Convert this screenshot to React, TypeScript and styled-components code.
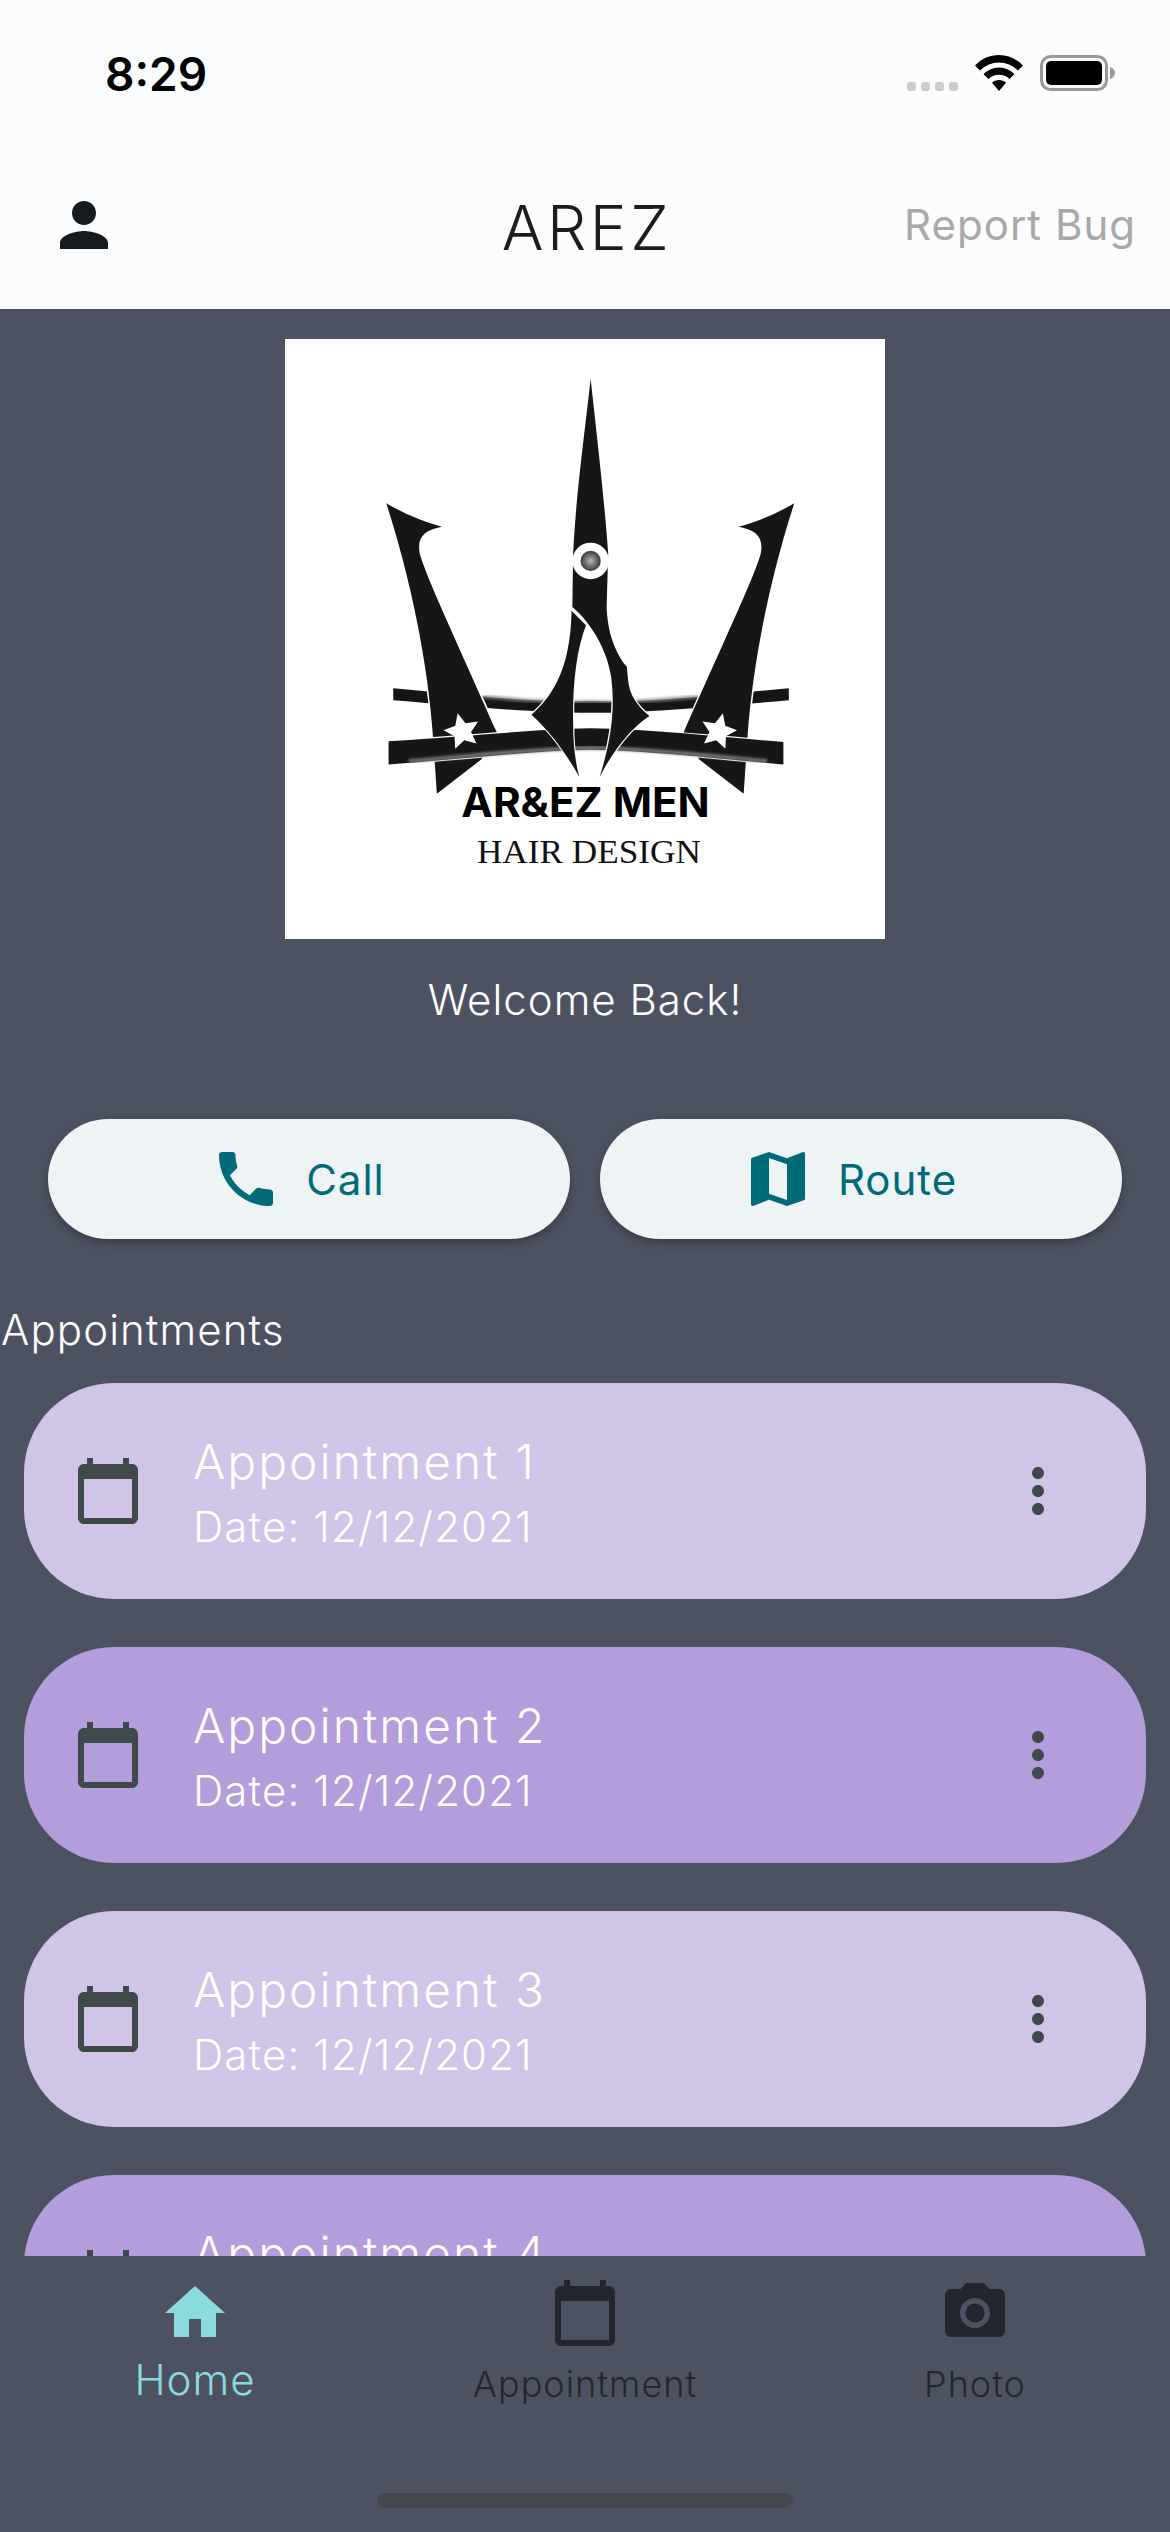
import React from 'react'
import styled, { createGlobalStyle } from 'styled-components'
import {
  MdCalendarToday,
  MdHome,
  MdMap,
  MdMoreVert,
  MdPerson,
  MdPhone,
  MdPhotoCamera,
} from 'react-icons/md'

const GlobalStyle = createGlobalStyle`
  html, body {
    margin: 0;
    padding: 0;
    background: #4d5262;
  }
  * {
    box-sizing: border-box;
  }
`

const Screen = styled.div`
  width: 1170px;
  height: 2532px;
  display: flex;
  flex-direction: column;
  overflow: hidden;
  background: #4d5262;
  font-family: Inter, sans-serif;
`

const Header = styled.header`
  flex: none;
  height: 309px;
  background: #fbfcfe;
`

const StatusBar = styled.div`
  height: 141px;
  display: flex;
  align-items: flex-start;
  justify-content: space-between;
  padding: 46px 55px 0 105px;
`

const Clock = styled.span`
  font-weight: 600;
  font-size: 46px;
  line-height: 56px;
  color: #000;
`

const StatusIcons = styled.div`
  display: flex;
  align-items: flex-start;
  padding-top: 9px;
`

const SignalDots = styled.div`
  display: flex;
  gap: 5px;
  margin-top: 27px;
  margin-right: 17px;
`

const SignalDot = styled.i`
  width: 9px;
  height: 9px;
  border-radius: 3px;
  background: #cccccc;
`

const Toolbar = styled.div`
  height: 168px;
  display: grid;
  grid-template-columns: 1fr auto 1fr;
  align-items: center;
`

const ProfileIcon = styled(MdPerson)`
  display: block;
  width: 72px;
  height: 72px;
  margin-left: 48px;
  color: #171a1c;
`

const Title = styled.h1`
  margin: 6px 0 0 4px;
  font-weight: 300;
  font-size: 62px;
  line-height: 72px;
  letter-spacing: 3.5px;
  color: #1a1c1e;
`

const ReportButton = styled.span`
  justify-self: end;
  margin-right: 34px;
  font-size: 42px;
  line-height: 52px;
  letter-spacing: 1px;
  color: #a8a8a8;
`

const Main = styled.main`
  flex: 1;
  min-height: 0;
  overflow: hidden;
  display: flex;
  flex-direction: column;
  align-items: center;
`

const LogoFrame = styled.div`
  flex: none;
  width: 600px;
  height: 600px;
  margin-top: 30px;
  background: #fff;
`

const Welcome = styled.p`
  margin: 31px 0 0;
  font-weight: 300;
  font-size: 42px;
  line-height: 60px;
  letter-spacing: 1px;
  color: #fff;
`

const ActionRow = styled.div`
  flex: none;
  width: 100%;
  display: grid;
  grid-template-columns: 1fr 1fr;
  gap: 30px;
  padding: 0 48px;
  margin-top: 89px;
`

const ActionButton = styled.button`
  height: 120px;
  display: flex;
  align-items: center;
  justify-content: center;
  gap: 24px;
  padding: 0 23px 0 0;
  border: none;
  border-radius: 60px;
  background: #eef3f6;
  box-shadow: 0 4px 8px rgba(0, 0, 0, 0.28);
  font-family: inherit;
  font-size: 42px;
  letter-spacing: 1px;
  color: #006a78;

  svg {
    width: 72px;
    height: 72px;
  }
`

const SectionTitle = styled.h2`
  align-self: flex-start;
  margin: 64px 0 0 1px;
  font-weight: 300;
  font-size: 42px;
  line-height: 54px;
  letter-spacing: 1.1px;
  color: #fff;
`

const AppointmentList = styled.div`
  flex: none;
  width: 100%;
  display: flex;
  flex-direction: column;
  gap: 48px;
  padding: 0 24px;
  margin-top: 26px;
`

const AppointmentCard = styled.div<{ $tone: string }>`
  flex: none;
  height: 216px;
  display: flex;
  align-items: center;
  padding: 0 72px 0 48px;
  border-radius: 90px;
  background: ${(p) => p.$tone};
  color: #3f484b;

  > svg {
    flex: none;
    width: 72px;
    height: 72px;
  }
`

const CardText = styled.div`
  flex: 1;
  min-width: 0;
  padding: 3px 0 0 49px;
  color: #fff;
`

const CardTitle = styled.div`
  font-weight: 300;
  font-size: 48px;
  line-height: 66px;
  letter-spacing: 2px;
`

const CardDate = styled.div`
  margin-top: 3px;
  font-weight: 300;
  font-size: 42px;
  line-height: 58px;
  letter-spacing: 1.15px;
`

const TabBar = styled.nav`
  flex: none;
  height: 276px;
  position: relative;
  display: grid;
  grid-template-columns: repeat(3, 1fr);
  align-items: start;
  padding-top: 21px;
  background: #4d5262;
`

const Tab = styled.div<{ $active?: boolean }>`
  display: flex;
  flex-direction: column;
  align-items: center;
  color: ${(p) => (p.$active ? '#8bdade' : '#23262e')};

  svg {
    width: 72px;
    height: 72px;
  }
`

const TabLabel = styled.span<{ $active?: boolean }>`
  font-weight: 300;
  font-size: ${(p) => (p.$active ? 42 : 36)}px;
  line-height: 48px;
  letter-spacing: 1px;
  margin-top: ${(p) => (p.$active ? 7 : 11)}px;
`

const HomeIndicator = styled.div`
  position: absolute;
  left: 377px;
  bottom: 24px;
  width: 416px;
  height: 15px;
  border-radius: 8px;
  background: #45474f;
`

const starPoints = (cx: number, cy: number, rot: number) => {
  const pts: string[] = []
  for (let i = 0; i < 10; i++) {
    const r = i % 2 === 0 ? 48 : 23
    const a = ((rot + i * 36 - 90) * Math.PI) / 180
    pts.push(`${cx + r * Math.cos(a)},${cy + r * Math.sin(a)}`)
  }
  return pts.join(' ')
}

const PRONG =
  'M272 432C320 460 370 480 415 492C370 500 350 520 358 560C372 615 450 780 556 1020L516 1090L402 1178L392 1030C378 830 330 610 272 432Z'

const Logo = () => (
  <svg viewBox="12 10 1541 1541" width="600" height="600">
    <defs>
      <radialGradient id="pivot">
        <stop offset="0" stopColor="#b5b5b5" />
        <stop offset="1" stopColor="#3a3a3a" />
      </radialGradient>
      <filter id="soft">
        <feGaussianBlur stdDeviation="4" />
      </filter>
    </defs>
    <path
      d="M290 907C500 925 650 945 797 940C950 945 1100 925 1306 907L1306 938C1100 955 950 970 797 970C650 970 500 955 290 938Z"
      fill="#151716"
    />
    <path
      d="M520 928C640 940 720 944 797 942C880 944 960 940 1075 928"
      fill="none"
      stroke="#8a8a8a"
      strokeWidth="7"
      filter="url(#soft)"
    />
    <path d={PRONG} fill="#151716" stroke="#fff" strokeWidth="8" paintOrder="stroke" />
    <path
      d={PRONG}
      transform="matrix(-1 0 0 1 1592 0)"
      fill="#151716"
      stroke="#fff"
      strokeWidth="8"
      paintOrder="stroke"
    />
    <path
      d="M278 1043C500 1030 650 1012 797 1010C950 1012 1100 1030 1292 1045L1292 1103C1100 1085 950 1068 797 1065C650 1068 500 1085 278 1103Z"
      fill="#151716"
      stroke="#fff"
      strokeWidth="6"
      paintOrder="stroke"
    />
    <path
      d="M330 1094C500 1080 650 1062 797 1060C950 1062 1100 1080 1250 1094"
      fill="none"
      stroke="#8a8a8a"
      strokeWidth="8"
      filter="url(#soft)"
    />
    <polygon points={starPoints(467, 1018, -14)} fill="#fff" />
    <polygon points={starPoints(1125, 1018, 14)} fill="#fff" />
    <path
      d="M797 112C812 250 832 420 842 560L838 700C842 780 868 825 890 852L893 885C897 925 915 950 948 978C905 1005 855 1065 820 1135C850 1040 860 960 850 880C840 810 800 740 750 698L752 560C760 400 782 250 797 112Z"
      fill="#151716"
      stroke="#fff"
      strokeWidth="6"
      paintOrder="stroke"
    />
    <path
      d="M748 708L785 745C760 810 750 900 752 1000C752 1050 758 1100 768 1135C735 1075 690 1015 645 975C690 935 745 870 748 708Z"
      fill="#151716"
      stroke="#fff"
      strokeWidth="6"
      paintOrder="stroke"
    />
    <circle cx="797" cy="580" r="47" fill="#fff" />
    <circle cx="797" cy="580" r="26" fill="url(#pivot)" />
    <text
      x="465"
      y="1237"
      textLength="638"
      lengthAdjust="spacingAndGlyphs"
      fontFamily="Inter, sans-serif"
      fontWeight="700"
      fontSize="106"
      fill="#000"
    >
      AR&amp;EZ MEN
    </text>
    <text
      x="505"
      y="1355"
      textLength="575"
      lengthAdjust="spacingAndGlyphs"
      fontFamily="'Liberation Serif', serif"
      fontSize="88"
      fill="#111"
    >
      HAIR DESIGN
    </text>
  </svg>
)

const WifiIcon = () => (
  <svg width="48" height="36" viewBox="0 0 48 36" style={{ marginRight: 17 }}>
    <path
      d="M24 0C15 0 7 3.4 0 10.5L5 15.5C10.500 10.200 17 7.500 24 7.500S37.500 10.200 43 15.500L48 10.500C41 3.400 33 0 24 0Z"
      fill="#000"
    />
    <path
      d="M24 12.500C18 12.500 13 14.700 8.500 19L13.500 24C16.500 21.200 20 19.800 24 19.800S31.500 21.200 34.500 24L39.500 19C35 14.700 30 12.500 24 12.500Z"
      fill="#000"
    />
    <path d="M24 25C21.300 25 19 26 17 27.800L24 36L31 27.800C29 26 26.700 25 24 25Z" fill="#000" />
  </svg>
)

const BatteryIcon = () => (
  <svg width="75" height="36" viewBox="0 0 75 36">
    <rect x="1.500" y="1.500" width="65" height="33" rx="9" fill="none" stroke="#999" strokeWidth="3" />
    <rect x="6" y="6" width="56" height="24" rx="5" fill="#000" />
    <path d="M70 12C73 13 75 15 75 18S73 23 70 24Z" fill="#999" />
  </svg>
)

const appointments = [
  { name: 'Appointment 1', tone: '#d1c4e9' },
  { name: 'Appointment 2', tone: '#b39ddb' },
  { name: 'Appointment 3', tone: '#d1c4e9' },
  { name: 'Appointment 4', tone: '#b39ddb' },
]

const App = () => {
  return (
    <Screen>
      <GlobalStyle />
      <Header>
        <StatusBar>
          <Clock>8:29</Clock>
          <StatusIcons>
            <SignalDots>
              {[0, 1, 2, 3].map((i) => (
                <SignalDot key={i} />
              ))}
            </SignalDots>
            <WifiIcon />
            <BatteryIcon />
          </StatusIcons>
        </StatusBar>
        <Toolbar>
          <ProfileIcon />
          <Title>AREZ</Title>
          <ReportButton>Report Bug</ReportButton>
        </Toolbar>
      </Header>
      <Main>
        <LogoFrame>
          <Logo />
        </LogoFrame>
        <Welcome>Welcome Back!</Welcome>
        <ActionRow>
          <ActionButton>
            <MdPhone />
            Call
          </ActionButton>
          <ActionButton>
            <MdMap />
            Route
          </ActionButton>
        </ActionRow>
        <SectionTitle>Appointments</SectionTitle>
        <AppointmentList>
          {appointments.map((item) => (
            <AppointmentCard key={item.name} $tone={item.tone}>
              <MdCalendarToday />
              <CardText>
                <CardTitle>{item.name}</CardTitle>
                <CardDate>Date: 12/12/2021</CardDate>
              </CardText>
              <MdMoreVert />
            </AppointmentCard>
          ))}
        </AppointmentList>
      </Main>
      <TabBar>
        <Tab $active>
          <MdHome />
          <TabLabel $active>Home</TabLabel>
        </Tab>
        <Tab>
          <MdCalendarToday />
          <TabLabel>Appointment</TabLabel>
        </Tab>
        <Tab>
          <MdPhotoCamera />
          <TabLabel>Photo</TabLabel>
        </Tab>
        <HomeIndicator />
      </TabBar>
    </Screen>
  )
}

export default App
